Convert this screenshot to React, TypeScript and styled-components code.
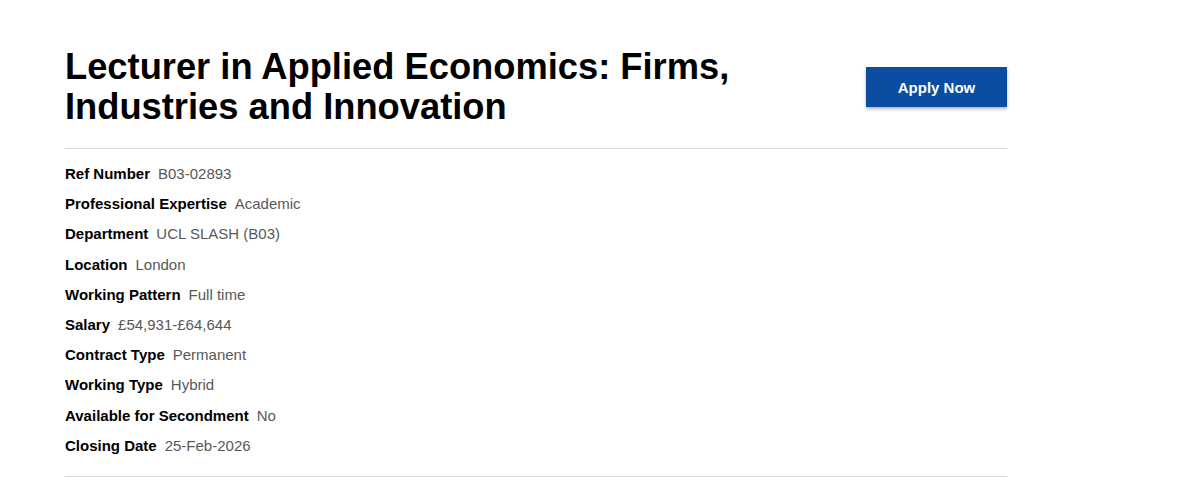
import React from 'react'
import styled, { createGlobalStyle } from 'styled-components'

const GlobalStyle = createGlobalStyle`
  body {
    margin: 0;
    background: #fff;
    font-family: 'Liberation Sans', Arial, sans-serif;
    color: #000;
  }
`

const Page = styled.div`
  width: 942px;
  padding: 47px 0 0 65px;
`

const Header = styled.div`
  display: flex;
  align-items: center;
  justify-content: space-between;
  padding-bottom: 21px;
  border-bottom: 1px solid #dcdcdc;
`

const Title = styled.h1`
  margin: 0;
  width: 720px;
  font-size: 36.3px;
  line-height: 40px;
  font-weight: 700;
  color: #000;
`

const ApplyButton = styled.button`
  width: 141px;
  height: 40px;
  border: none;
  background: #0a4da1;
  color: #fff;
  font-family: inherit;
  font-size: 15px;
  font-weight: 700;
  box-shadow: 0 2px 3px rgba(0, 0, 0, 0.3);
  cursor: pointer;
`

const Details = styled.dl`
  margin: 0;
  padding: 10px 0 15px;
  border-bottom: 1px solid #dcdcdc;
`

const Row = styled.div`
  display: flex;
  align-items: baseline;
  gap: 8px;
  font-size: 15px;
  line-height: 30.2px;
`

const Label = styled.dt`
  font-weight: 700;
  color: #000;
`

const Value = styled.dd`
  margin: 0;
  color: #585858;
`

const DETAILS = [
  { label: 'Ref Number', value: 'B03-02893' },
  { label: 'Professional Expertise', value: 'Academic' },
  { label: 'Department', value: 'UCL SLASH (B03)' },
  { label: 'Location', value: 'London' },
  { label: 'Working Pattern', value: 'Full time' },
  { label: 'Salary', value: '£54,931-£64,644' },
  { label: 'Contract Type', value: 'Permanent' },
  { label: 'Working Type', value: 'Hybrid' },
  { label: 'Available for Secondment', value: 'No' },
  { label: 'Closing Date', value: '25-Feb-2026' },
]

function App() {
  return (
    <>
      <GlobalStyle />
      <Page>
        <Header>
          <Title>Lecturer in Applied Economics: Firms, Industries and Innovation</Title>
          <ApplyButton>Apply Now</ApplyButton>
        </Header>
        <Details>
          {DETAILS.map(({ label, value }) => (
            <Row key={label}>
              <Label>{label}</Label>
              <Value>{value}</Value>
            </Row>
          ))}
        </Details>
      </Page>
    </>
  )
}

export default App
